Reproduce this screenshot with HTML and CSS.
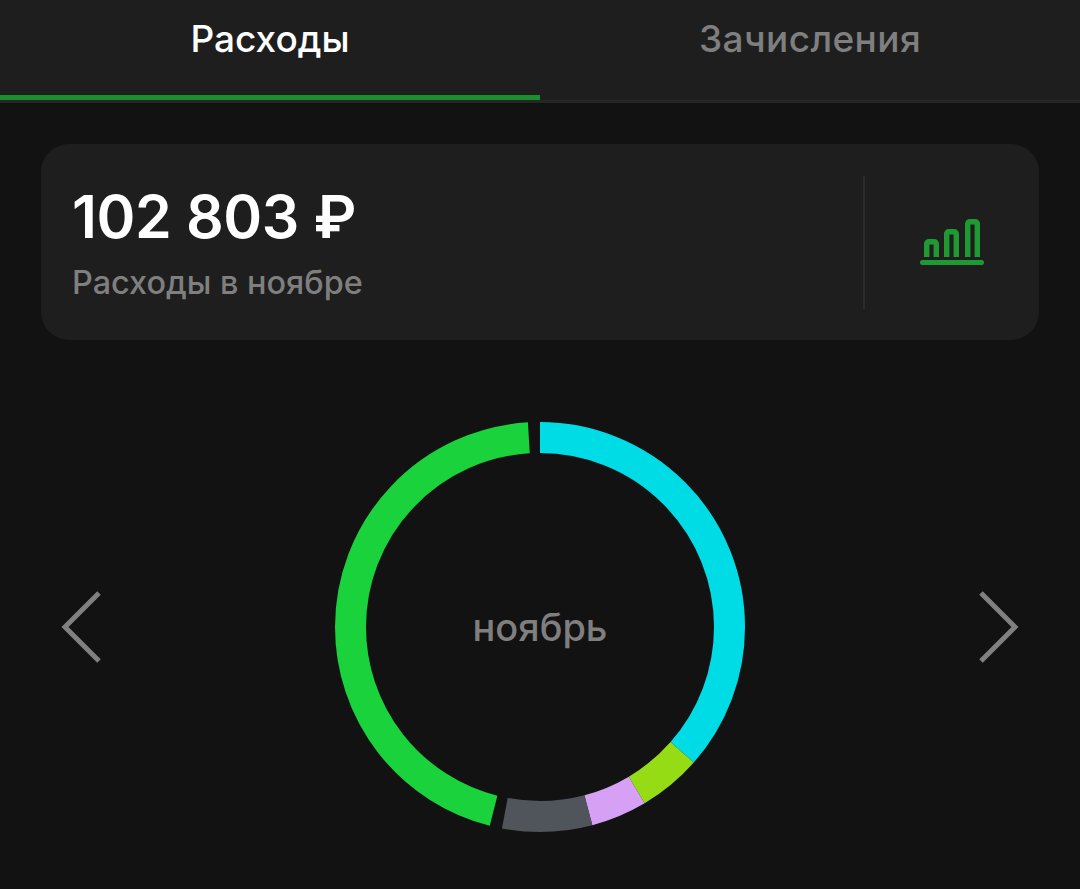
FILE: index.html
```html
<!DOCTYPE html>
<html lang="ru">
<head>
    <meta charset="UTF-8">
    <meta name="viewport" content="width=device-width, initial-scale=1.0">
    <title>Расходы</title>
    <link rel="stylesheet" href="styles.css">
</head>
<body>
    <div class="tabs">
        <div class="tab tab-active">Расходы</div>
        <div class="tab">Зачисления</div>
    </div>

    <div class="summary">
        <div class="summary-text">
            <div class="amount">102 803 ₽</div>
            <div class="caption">Расходы в ноябре</div>
        </div>
        <div class="summary-action">
            <svg class="chart-icon" width="64" height="46" viewBox="0 0 64 46" fill="none">
                <path d="M6.7 38V24.7a2 2 0 0 1 2-2h5.6a2 2 0 0 1 2 2V38" stroke="#1f9a33" stroke-width="5.4"/>
                <path d="M26.7 38V14.7a2 2 0 0 1 2-2h5.6a2 2 0 0 1 2 2V38" stroke="#1f9a33" stroke-width="5.4"/>
                <path d="M47.7 38V4.7a2 2 0 0 1 2-2h5.6a2 2 0 0 1 2 2V38" stroke="#1f9a33" stroke-width="5.4"/>
                <rect x="0" y="41" width="64" height="5" rx="2.5" fill="#1f9a33"/>
            </svg>
        </div>
    </div>

    <div class="month">
        <svg class="arrow" width="42" height="74" viewBox="0 0 42 74" fill="none">
            <path d="M38 3L4 37l34 34" stroke="#808080" stroke-width="5"/>
        </svg>
        <div class="ring">
            <svg width="410" height="410" viewBox="0 0 410 410" fill="none">
                <g transform="rotate(-90 205 205)" stroke-width="31">
                    <circle cx="205" cy="205" r="189.5" pathLength="360" stroke="#00dce6" stroke-dasharray="131.4 360"/>
                    <circle cx="205" cy="205" r="189.5" pathLength="360" stroke="#96dc14" stroke-dasharray="17.9 360" stroke-dashoffset="-131.4"/>
                    <circle cx="205" cy="205" r="189.5" pathLength="360" stroke="#d6a0f5" stroke-dasharray="15.9 360" stroke-dashoffset="-149.3"/>
                    <circle cx="205" cy="205" r="189.5" pathLength="360" stroke="#50555c" stroke-dasharray="25.5 360" stroke-dashoffset="-165.2"/>
                    <circle cx="205" cy="205" r="189.5" pathLength="360" stroke="#19d23c" stroke-dasharray="162.4 360" stroke-dashoffset="-194.2"/>
                </g>
            </svg>
            <div class="ring-label">ноябрь</div>
        </div>
        <svg class="arrow" width="42" height="74" viewBox="0 0 42 74" fill="none">
            <path d="M4 3l34 34L4 71" stroke="#808080" stroke-width="5"/>
        </svg>
    </div>
</body>
</html>
```

FILE: styles.css
```css
* {
    box-sizing: border-box;
}
body {
    margin: 0;
    height: 889px;
    overflow: hidden;
    background-color: #121212;
    font-family: Inter, "Noto Sans", Arial, sans-serif;
}
.tabs {
    display: flex;
    height: 103px;
    background-color: #1e1e1e;
    border-bottom: 3px solid #262626;
}
.tab {
    flex: 1;
    height: 100px;
    padding-top: 14px;
    text-align: center;
    font-size: 37px;
    font-weight: 500;
    letter-spacing: 0.4px;
    line-height: 50px;
    color: #7f7f7f;
}
.tab-active {
    color: #fff;
    letter-spacing: 0;
    border-bottom: 5px solid #1c8f2e;
}
.summary {
    display: flex;
    align-items: center;
    height: 196px;
    margin: 41px 41px 0;
    padding-left: 31px;
    background-color: #1e1e1e;
    border-radius: 28px;
}
.summary-text {
    flex: 1;
    padding-top: 2px;
}
.amount {
    font-size: 59px;
    line-height: 72px;
    font-weight: 600;
    letter-spacing: -0.4px;
    color: #fff;
}
.caption {
    margin-top: 8px;
    font-size: 32.4px;
    font-weight: 500;
    line-height: 44px;
    color: #7f7f7f;
}
.summary-action {
    display: flex;
    align-items: center;
    justify-content: center;
    width: 176px;
    height: 133px;
    border-left: 2px solid #2c2c2c;
}
.month {
    display: flex;
    align-items: center;
    justify-content: space-between;
    margin-top: 82px;
    padding: 0 61px;
}
.arrow {
    display: block;
}
.ring {
    position: relative;
    width: 410px;
    height: 410px;
}
.ring svg {
    display: block;
}
.ring-label {
    position: absolute;
    left: 0;
    right: 0;
    top: 180px;
    text-align: center;
    font-size: 38px;
    font-weight: 500;
    line-height: 50px;
    color: #7f7f7f;
}
```
